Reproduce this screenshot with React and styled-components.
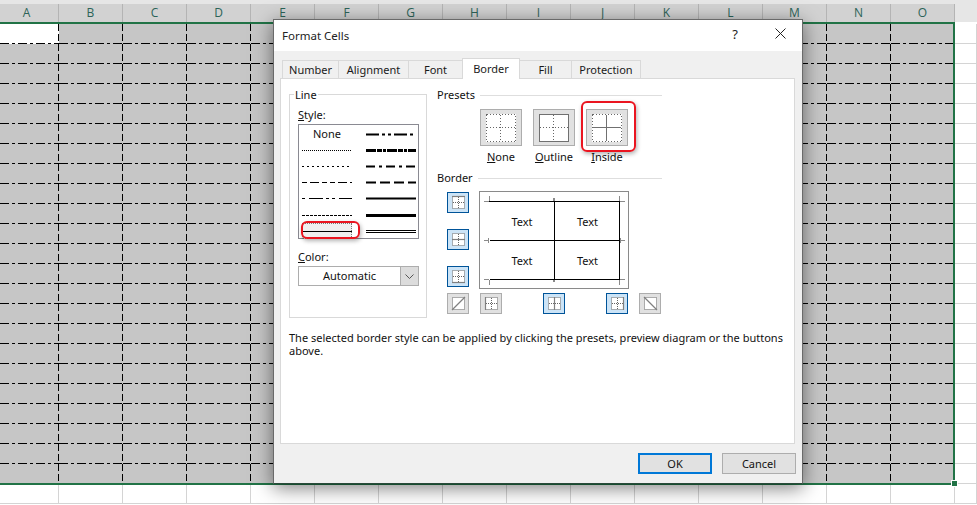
import React from "react";
import styled, { createGlobalStyle } from "styled-components";

const Global = createGlobalStyle`
  * { box-sizing: border-box; }
  html, body { margin: 0; padding: 0; background: #fff; }
  body { font-family: "Noto Sans", "Open Sans", sans-serif; font-size: 11px; color: #111; }
`;

const Page = styled.div`
  position: relative;
  width: 977px;
  height: 505px;
  overflow: hidden;
  display: flex;
  flex-direction: column;
  background: #fff;
`;
const TopStrip = styled.div`height: 4px; background: #e6e6e6; flex: none;`;
const HeaderRow = styled.div`
  display: grid;
  grid-template-columns: 59px repeat(14, 64px) 1fr;
  height: 18px;
  flex: none;
  background: #e6e6e6;
`;
const ColHead = styled.div`
  background: #d2d2d2;
  border-right: 1px solid #b4b4b4;
  color: #2c6458;
  font-family: "Open Sans", sans-serif;
  font-size: 12px;
  line-height: 18px;
  text-align: center;
  padding-right: ${p => (p.$first ? 5 : 0)}px;
`;
const Grid = styled.div`
  display: grid;
  grid-template-columns: 59px repeat(14, 64px) 1fr;
  grid-auto-rows: 20px;
  padding-top: 2px;
  flex: none;
`;
const Cell = styled.div`
  border-right: 1px solid #d4d4d4;
  border-bottom: 1px solid #d4d4d4;
`;
const SelCell = styled.div`
  background-color: ${p => (p.$active ? "#fff" : "#c6c6c6")};
  background-image:
    repeating-linear-gradient(90deg, #000 0 9px, transparent 9px 12px, #000 12px 15px, transparent 15px 18px),
    repeating-linear-gradient(180deg, #000 0 7px, transparent 7px 10px);
  background-size: 100% 1px, 1px 100%;
  background-position: 0 100%, 100% 0;
  background-repeat: no-repeat;
`;
const SelectionOutline = styled.div`
  position: absolute;
  left: -3px;
  top: 22px;
  width: 958px;
  height: 463px;
  border: 2px solid #217346;
  pointer-events: none;
`;
const Handle = styled.div`
  position: absolute;
  left: 952px;
  top: 481px;
  width: 5px;
  height: 5px;
  background: #217346;
  outline: 1px solid #fff;
`;

const Dialog = styled.div`
  position: absolute;
  left: 273px;
  top: 19px;
  width: 530px;
  height: 465px;
  background: #f0f0f0;
  border: 1px solid #6a6a6a;
  border-bottom-color: #2a4a3a;
  box-shadow: 0 4px 18px rgba(0, 0, 0, 0.5);
  display: flex;
  flex-direction: column;
`;
const TitleBar = styled.div`
  height: 31px;
  flex: none;
  background: #fff;
  display: flex;
  align-items: center;
  padding: 0 0 1px 8px;
  font-size: 11.5px;
  color: #222;
`;
const TitleText = styled.div`flex: 1;`;
const HelpMark = styled.div`
  width: 46px;
  text-align: center;
  font-size: 13px;
  margin-bottom: 3px;
`;
const CloseButton = styled.div`
  width: 44px;
  margin-bottom: 3px;
  display: flex;
  justify-content: center;
`;
const TabStrip = styled.div`
  display: flex;
  align-items: flex-end;
  height: 28px;
  flex: none;
  padding-left: 8px;
  margin-bottom: -1px;
  position: relative;
  z-index: 1;
`;
const Tab = styled.div`
  width: ${p => p.$w}px;
  height: ${p => (p.$active ? 21 : 19)}px;
  background: ${p => (p.$active ? "#fff" : "#f0f0f0")};
  border: 1px solid #d9d9d9;
  border-bottom: ${p => (p.$active ? "0" : "1px solid #d9d9d9")};
  margin-left: ${p => (p.$first ? 0 : -1)}px;
  text-align: center;
  line-height: ${p => (p.$active ? 20 : 18)}px;
  font-size: 11px;
  color: #1a1a1a;
`;
const Panel = styled.div`
  height: 366px;
  margin: 0 7px 0 6px;
  flex: none;
  background: #fff;
  border: 1px solid #d9d9d9;
  padding: 8px 0 0 8px;
`;
const TopArea = styled.div`display: flex; gap: 10px;`;
const LineGroup = styled.fieldset`
  width: 138px;
  height: 231px;
  margin: 0;
  padding: 0 0 0 8px;
  border: 1px solid #d9d9d9;
`;
const GroupLegend = styled.legend`
  position: relative;
  top: 1px;
  margin-left: -4px;
  padding: 0 1px;
  font-size: 11px;
  line-height: 14px;
`;
const FieldLabel = styled.div`
  font-size: 11px;
  line-height: 14px;
  margin-top: ${p => p.$top}px;
`;
const StyleList = styled.div`
  width: 121px;
  height: 115px;
  margin-top: 2px;
  border: 1px solid #8a8a92;
  display: grid;
  grid-template-columns: 1fr 1fr;
  grid-template-rows: repeat(7, 16.2px);
  padding: 1px 0 0 3px;
  column-gap: 0;
  position: relative;
`;
const NoneOption = styled.div`
  width: 50px;
  text-align: center;
  font-size: 11px;
  line-height: 16px;
`;
const SampleSlot = styled.div`
  width: 50px;
  margin-left: ${p => (p.$right ? 6 : 0)}px;
  display: flex;
  align-items: center;
  background: ${p => (p.$selected ? "#efefef" : "transparent")};
  outline: ${p => (p.$selected ? "1px dotted #777" : "none")};
  outline-offset: -1px;
`;
const RedMark = styled.div`
  position: absolute;
  left: ${p => p.$x}px;
  top: ${p => p.$y}px;
  width: ${p => p.$w}px;
  height: ${p => p.$h}px;
  border: 2px solid #ea1520;
  border-radius: 6px;
  box-shadow: 1px 2px 4px rgba(0, 0, 0, 0.3);
  pointer-events: none;
`;
const Combo = styled.div`
  width: 121px;
  height: 20px;
  margin-top: 2px;
  border: 1px solid #adadad;
  display: flex;
  line-height: 17px;
  font-size: 11px;
`;
const ComboValue = styled.div`flex: 1; text-align: center;`;
const ComboArrow = styled.div`
  width: 18px;
  background: #dcdcdc;
  border-left: 1px solid #adadad;
  display: flex;
  align-items: center;
  justify-content: center;
`;

const RightColumn = styled.div`width: 225px; padding-top: 1px;`;
const SectionTitle = styled.div`
  display: flex;
  align-items: center;
  gap: 5px;
  height: 14px;
  line-height: 14px;
  font-size: 11px;
  margin-top: ${p => p.$top || 0}px;
  &::after { content: ""; flex: 1; height: 1px; background: #dedede; }
`;
const PresetRow = styled.div`
  display: flex;
  gap: 11px;
  padding-left: 43px;
  margin-top: 7px;
`;
const Preset = styled.div`
  position: relative;
  width: 42px;
  display: flex;
  flex-direction: column;
  align-items: center;
`;
const PresetButton = styled.div`
  width: 42px;
  height: 37px;
  background: #e1e1e1;
  border: 1px solid #adadad;
  display: flex;
  align-items: center;
  justify-content: center;
`;
const PresetLabel = styled.div`
  font-size: 11px;
  line-height: 14px;
  margin-top: 4px;
  white-space: nowrap;
`;
const BorderArea = styled.div`
  display: grid;
  grid-template-columns: 22px 150px;
  column-gap: 10px;
  padding-left: 10px;
  margin-top: 6px;
`;
const SideButtons = styled.div`
  display: flex;
  flex-direction: column;
  justify-content: space-between;
  height: 95px;
  margin-top: 1px;
`;
const SmallButton = styled.div`
  width: 22px;
  height: 21px;
  margin-left: ${p => p.$gap || 0}px;
  flex: none;
  background: ${p => (p.$on ? "#cce4f7" : "#e1e1e1")};
  border: 1px solid ${p => (p.$on ? "#005499" : "#adadad")};
  display: flex;
  align-items: center;
  justify-content: center;
`;
const Preview = styled.div`
  position: relative;
  width: 150px;
  height: 98px;
  border: 1px solid #8a8a8a;
  padding: 9px 9px 0;
`;
const PreviewGrid = styled.div`
  width: 131px;
  display: grid;
  grid-template-columns: 65px 65px;
  grid-auto-rows: 39px;
  border-top: 1px solid #000;
  border-right: 1px solid #000;
  padding-left: 1px;
`;
const PreviewCell = styled.div`
  display: flex;
  align-items: center;
  justify-content: center;
  font-size: 11px;
  border-bottom: 1px solid #000;
  border-right: ${p => (p.$left ? "1px solid #000" : "0")};
`;
const Ticks = styled.svg`
  position: absolute;
  left: 0;
  top: 0;
`;
const BottomButtons = styled.div`
  display: flex;
  padding-left: 10px;
  margin-top: 4px;
`;
const HelpText = styled.div`
  width: 500px;
  margin-top: 13px;
  font-size: 11px;
  line-height: 13px;
`;
const Footer = styled.div`
  display: flex;
  justify-content: flex-end;
  gap: 10px;
  padding: 9px 6px 0 0;
`;
const DialogButton = styled.div`
  width: 74px;
  height: 21px;
  background: #e1e1e1;
  border: ${p => (p.$primary ? "2px solid #0078d7" : "1px solid #adadad")};
  text-align: center;
  font-size: 11px;
  line-height: ${p => (p.$primary ? 17 : 19)}px;
`;

const COLS = "ABCDEFGHIJKLMNO".split("");

const LineSample = ({ width = 1, dash, double }) => (
  <svg width="50" height="5" viewBox="0 0 50 5">
    {double ? (
      <>
        <line x1="0" x2="50" y1="1.5" y2="1.5" stroke="#000" strokeWidth="1" />
        <line x1="0" x2="50" y1="3.5" y2="3.5" stroke="#000" strokeWidth="1" />
      </>
    ) : (
      <line x1="0" x2="50" y1="2.5" y2="2.5" stroke="#000" strokeWidth={width} strokeDasharray={dash} />
    )}
  </svg>
);

const LEFT = [
  null,
  { dash: "1 1" },
  { dash: "2 3" },
  { dash: "5 3 9 3 5 3" },
  { dash: "3 4 14 3 3 3" },
  { dash: "3 1" },
  { selected: true },
];
const RIGHT = [
  { width: 2, dash: "13 3 3 3 3 3" },
  { width: 3, dash: "10 1 5 1 3 1" },
  { width: 2, dash: "9 4 3 4" },
  { width: 2, dash: "10 4" },
  { width: 2 },
  { width: 3 },
  { double: true },
];

const DOTS = "1 2";

const PresetGlyph = ({ outline, inside }) => (
  <svg width="30" height="28" viewBox="0 0 30 28" shapeRendering="crispEdges">
    <rect width="30" height="28" fill="#fff" />
    {outline ? (
      <rect x="0.5" y="0.5" width="29" height="27" fill="none" stroke="#707070" />
    ) : (
      <rect x="0.5" y="0.5" width="29" height="27" fill="none" stroke="#666" strokeDasharray={DOTS} />
    )}
    <line x1="14.5" x2="14.5" y1="1" y2="27" stroke={inside ? "#707070" : "#666"} strokeDasharray={inside ? undefined : DOTS} />
    <line x1="1" x2="29" y1="13.5" y2="13.5" stroke={inside ? "#707070" : "#666"} strokeDasharray={inside ? undefined : DOTS} />
  </svg>
);

const EDGE_LINES = {
  top: [1, 1.5, 14, 1.5],
  hmid: [1, 7.5, 14, 7.5],
  bottom: [1, 13.5, 14, 13.5],
  left: [1.5, 1, 1.5, 14],
  vmid: [7.5, 1, 7.5, 14],
  right: [13.5, 1, 13.5, 14],
  up: [1, 14, 14, 1],
  down: [1, 1, 14, 14],
};

const EdgeGlyph = ({ edge }) => {
  const [x1, y1, x2, y2] = EDGE_LINES[edge];
  const diagonal = edge === "up" || edge === "down";
  return (
    <svg width="15" height="15" viewBox="0 0 15 15">
      <rect x="1.5" y="1.5" width="12" height="12" fill="#fff" stroke="#666" strokeDasharray="1 1" />
      {!diagonal && (
        <>
          <line x1="7.5" x2="7.5" y1="2" y2="13" stroke="#666" strokeDasharray="1 1" />
          <line x1="2" x2="13" y1="7.5" y2="7.5" stroke="#666" strokeDasharray="1 1" />
        </>
      )}
      <line x1={x1} y1={y1} x2={x2} y2={y2} stroke="#808080" strokeWidth="1.2" />
    </svg>
  );
};

const TICKS = [
  "M4 9.5H9M9.5 4V9",
  "M73.5 6V9M74.5 6V9",
  "M139.5 4V9M140 9.5H145",
  "M4 48.5H9M8.5 46V51M140 48.5H145M140.5 46V51",
  "M4 87.5H9M9.5 88V93",
  "M73.5 88V90M74.5 88V90",
  "M140 87.5H145M139.5 88V93",
];

export default function App() {
  return (
    <Page>
      <Global />
      <TopStrip />
      <HeaderRow>
        {COLS.map((c, i) => (
          <ColHead key={c} $first={i === 0}>{c}</ColHead>
        ))}
      </HeaderRow>
      <Grid>
        {Array.from({ length: 24 }).flatMap((_, r) =>
          Array.from({ length: 16 }).map((_, c) =>
            r < 23 && c < 15 ? (
              <SelCell key={`${r}-${c}`} $active={r === 0 && c === 0} />
            ) : (
              <Cell key={`${r}-${c}`} />
            )
          )
        )}
      </Grid>
      <SelectionOutline />
      <Handle />
      <Dialog>
        <TitleBar>
          <TitleText>Format Cells</TitleText>
          <HelpMark>?</HelpMark>
          <CloseButton>
            <svg width="11" height="11" viewBox="0 0 11 11">
              <path d="M0.5 0.5L10.5 10.5M10.5 0.5L0.5 10.5" stroke="#222" strokeWidth="1" fill="none" />
            </svg>
          </CloseButton>
        </TitleBar>
        <TabStrip>
          <Tab $w={57} $first>Number</Tab>
          <Tab $w={71}>Alignment</Tab>
          <Tab $w={55}>Font</Tab>
          <Tab $w={58} $active>Border</Tab>
          <Tab $w={53}>Fill</Tab>
          <Tab $w={70}>Protection</Tab>
        </TabStrip>
        <Panel>
          <TopArea>
            <LineGroup>
              <GroupLegend>Line</GroupLegend>
              <FieldLabel $top={7}><u>S</u>tyle:</FieldLabel>
              <StyleList>
                {LEFT.map((l, i) => (
                  <React.Fragment key={i}>
                    {l === null ? (
                      <NoneOption>None</NoneOption>
                    ) : (
                      <SampleSlot $selected={l.selected}>
                        <LineSample {...l} />
                      </SampleSlot>
                    )}
                    <SampleSlot $right>
                      <LineSample {...RIGHT[i]} />
                    </SampleSlot>
                  </React.Fragment>
                ))}
                <RedMark $x={2} $y={96} $w={59} $h={18} />
              </StyleList>
              <FieldLabel $top={11}><u>C</u>olor:</FieldLabel>
              <Combo>
                <ComboValue>Automatic</ComboValue>
                <ComboArrow>
                  <svg width="9" height="5" viewBox="0 0 9 5">
                    <path d="M0.5 0.5L4.5 4.5L8.5 0.5" stroke="#555" fill="none" />
                  </svg>
                </ComboArrow>
              </Combo>
            </LineGroup>
            <RightColumn>
              <SectionTitle>Presets</SectionTitle>
              <PresetRow>
                <Preset>
                  <PresetButton><PresetGlyph /></PresetButton>
                  <PresetLabel><u>N</u>one</PresetLabel>
                </Preset>
                <Preset>
                  <PresetButton><PresetGlyph outline /></PresetButton>
                  <PresetLabel><u>O</u>utline</PresetLabel>
                </Preset>
                <Preset>
                  <PresetButton><PresetGlyph inside /></PresetButton>
                  <PresetLabel><u>I</u>nside</PresetLabel>
                  <RedMark $x={-5} $y={-8} $w={55} $h={51} />
                </Preset>
              </PresetRow>
              <SectionTitle $top={7}>Border</SectionTitle>
              <BorderArea>
                <SideButtons>
                  <SmallButton $on><EdgeGlyph edge="top" /></SmallButton>
                  <SmallButton $on><EdgeGlyph edge="hmid" /></SmallButton>
                  <SmallButton $on><EdgeGlyph edge="bottom" /></SmallButton>
                </SideButtons>
                <Preview>
                  <PreviewGrid>
                    <PreviewCell $left>Text</PreviewCell>
                    <PreviewCell>Text</PreviewCell>
                    <PreviewCell $left>Text</PreviewCell>
                    <PreviewCell>Text</PreviewCell>
                  </PreviewGrid>
                  <Ticks width="148" height="96" viewBox="0 0 148 96">
                    {TICKS.map((d, i) => (
                      <path key={i} d={d} stroke="#8a8a8a" fill="none" />
                    ))}
                  </Ticks>
                </Preview>
              </BorderArea>
              <BottomButtons>
                <SmallButton><EdgeGlyph edge="up" /></SmallButton>
                <SmallButton $gap={11}><EdgeGlyph edge="left" /></SmallButton>
                <SmallButton $gap={41} $on><EdgeGlyph edge="vmid" /></SmallButton>
                <SmallButton $gap={41} $on><EdgeGlyph edge="right" /></SmallButton>
                <SmallButton $gap={11}><EdgeGlyph edge="down" /></SmallButton>
              </BottomButtons>
            </RightColumn>
          </TopArea>
          <HelpText>
            The selected border style can be applied by clicking the presets, preview diagram or the buttons above.
          </HelpText>
        </Panel>
        <Footer>
          <DialogButton $primary>OK</DialogButton>
          <DialogButton>Cancel</DialogButton>
        </Footer>
      </Dialog>
    </Page>
  );
}
